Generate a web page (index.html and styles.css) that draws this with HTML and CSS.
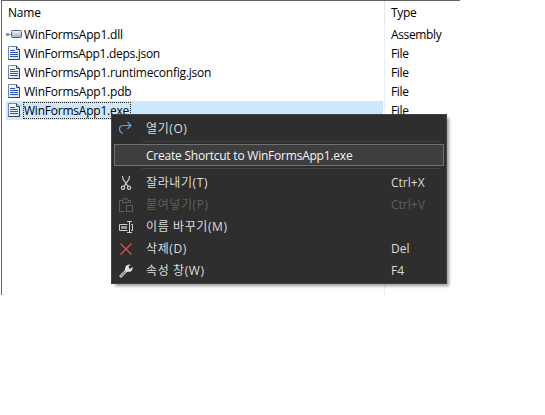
FILE: index.html
```html
<!DOCTYPE html>
<html lang="ko">
<head>
<meta charset="utf-8">
<title>WinFormsApp1</title>
<link rel="stylesheet" href="styles.css">
</head>
<body>
<svg width="0" height="0" class="defs">
  <defs>
    <linearGradient id="pin" x1="0" y1="0" x2="0" y2="1"><stop offset="0" stop-color="#f4f6fa"/><stop offset="1" stop-color="#9fa9bf"/></linearGradient>
    <linearGradient id="page" x1="0" y1="0" x2="1" y2="1"><stop offset="0" stop-color="#ffffff"/><stop offset="1" stop-color="#d5dded"/></linearGradient>
    <symbol id="doc" viewBox="0 0 16 16">
      <path d="M2.500 1.500h8l3 3v10h-11z" fill="url(#page)" stroke="#7286a6"/>
      <path d="M10.500 1.500v3h3v10h-11" fill="none" stroke="#34435f"/>
      <path d="M4 5.500h5M4 7.500h8M4 9.500h8M4 11.500h8" stroke="#2b59bd"/>
    </symbol>
  </defs>
</svg>
<div class="panel">
  <div class="row head"><span class="name">Name</span><span class="type">Type</span></div>
  <div class="row"><div class="cell"><svg class="icon" viewBox="0 0 16 16"><path d="M0 7h3v3H0z" fill="#8b95a9"/><path d="M3 8.500h2" stroke="#8b95a9"/><rect x="5.500" y="4.500" width="10" height="7" rx="1" fill="url(#pin)" stroke="#56627d"/></svg><span class="file">WinFormsApp1.dll</span></div><span class="type">Assembly</span></div>
  <div class="row"><div class="cell"><svg class="icon"><use href="#doc"/></svg><span class="file tight">WinFormsApp1.deps.json</span></div><span class="type">File</span></div>
  <div class="row"><div class="cell"><svg class="icon"><use href="#doc"/></svg><span class="file">WinFormsApp1.runtimeconfig.json</span></div><span class="type">File</span></div>
  <div class="row"><div class="cell"><svg class="icon"><use href="#doc"/></svg><span class="file">WinFormsApp1.pdb</span></div><span class="type">File</span></div>
  <div class="row"><div class="cell selected"><svg class="icon"><use href="#doc"/></svg><span class="file focus">WinFormsApp1.exe</span></div><span class="type">File</span></div>
</div>
<div class="menu">
  <div class="item"><svg class="mi" viewBox="0 0 16 16"><path d="M5 13.500C2.500 12.500 1.500 11 1.500 9C1.500 6.500 3.500 5.500 5.500 5.500H13M9.500 2L13 5.500L9.500 9" fill="none" stroke="#55a4ec" stroke-width="1.200"/></svg><span class="label down">열기(O)</span></div>
  <div class="sep s1"></div>
  <div class="item hot"><span class="create">Create Shortcut to WinFormsApp1.exe</span></div>
  <div class="sep s2"></div>
  <div class="item"><svg class="mi" viewBox="0 0 16 16"><path d="M4.500 1L5 4L9.700 11M11.500 1L11 4L6.300 11" fill="none" stroke="#d0d0d0" stroke-width="1.200"/><circle cx="5" cy="12.700" r="1.600" fill="none" stroke="#d0d0d0" stroke-width="1.200"/><circle cx="11" cy="12.700" r="1.600" fill="none" stroke="#d0d0d0" stroke-width="1.200"/></svg><span class="label">잘라내기(T)</span><span class="key">Ctrl+X</span></div>
  <div class="item off"><svg class="mi" viewBox="0 0 16 16"><path d="M6.500 14.500h-5v-11h3M10.500 3.500h2v3M4.500 5.500h6v-2.500h-1.500v-1.500h-3v1.500h-1.500zM8.500 8.500h6v6h-6z" fill="none" stroke="#5f5f5f"/></svg><span class="label">붙여넣기(P)</span><span class="key">Ctrl+V</span></div>
  <div class="item"><svg class="mi" viewBox="0 0 16 16"><path d="M9.500 5.500h-8v6h8M13 5.500h1.500v6H13M9 2.500h5M11.500 3v10M9 13.500h5" fill="none" stroke="#d0d0d0"/><path d="M3 7h6v3H3z" fill="#999"/></svg><span class="label">이름 바꾸기(M)</span></div>
  <div class="item"><svg class="mi" viewBox="0 0 16 16"><path d="M2.500 2.500l11 11M13.500 2.500l-11 11" stroke="#e84a58" stroke-width="1.200"/></svg><span class="label">삭제(D)</span><span class="key">Del</span></div>
  <div class="item"><svg class="mi" viewBox="0 0 16 16"><path d="M2.800 13.200L9 7" stroke="#bdbdbd" stroke-width="3" stroke-linecap="round"/><path d="M2.800 13.200L7.500 8.500" stroke="#666" stroke-width=".8"/><path d="M12.500 1.700L10.500 3.700L11 5.300L12.500 5.700L14.500 3.700C15.300 6.500 13.500 9 10.500 8.800L8.500 9L7 7.400C6.500 4 9 .8 12.500 1.700Z" fill="#e2e2e2"/></svg><span class="label">속성 창(W)</span><span class="key">F4</span></div>
</div>
</body>
</html>
```
FILE: styles.css
```css
body { margin: 0; width: 545px; height: 415px; overflow: hidden; position: relative; background: #fff; color: #000; font: 12px/19px "Open Sans", "Noto Sans CJK KR", sans-serif; letter-spacing: -0.22px; white-space: nowrap; }
.defs { position: absolute; }
.panel { box-sizing: border-box; width: 459px; height: 295px; margin-left: 1px; border-top: 1px solid #646464; border-left: 1px solid #646464;
  background: linear-gradient(#e5e5e5, #e5e5e5) 382px 0 / 1px 24px no-repeat, linear-gradient(#e6f0fc, #e6f0fc) 382px 24px / 1px 270px no-repeat; }
.row { display: flex; height: 19px; }
.head { height: 24px; line-height: 24px; }
.name { box-sizing: border-box; width: 383px; padding-left: 6px; }
.type { margin-left: 6px; letter-spacing: -0.35px; }
.cell { display: flex; align-items: flex-start; width: 377px; margin-left: 4px; margin-right: 2px; }
.icon { width: 16px; height: 16px; margin-top: 1px; margin-right: 1px; flex: none; }
.file { height: 17px; line-height: 17px; margin-top: 1px; padding-left: 1px; }
.tight { letter-spacing: -0.3px; }
.selected { background: #cce8ff; }
.focus { outline: 1px dotted #222; outline-offset: -1px; padding-right: 2px; }
.menu { position: absolute; left: 111px; top: 114px; width: 336px; height: 170px; box-sizing: border-box; border: 1px solid #424242; padding: 2px; background: #2e2e2e; color: #dcdcdc; box-shadow: 3px 3px 3px -1px rgba(0,0,0,.4); }
.item { display: flex; align-items: center; height: 22px; line-height: 22px; box-sizing: border-box; }
.mi { width: 16px; height: 16px; margin-left: 4px; margin-right: 12px; flex: none; }
.label { width: 245px; letter-spacing: 0.6px; }
.down { padding-top: 2px; }
.key { letter-spacing: 0; }
.hot { background: #3e3e3e; border: 1px solid #707070; color: #f4f4f4; padding-left: 31px; }
.create { padding-top: 2px; }
.off { color: #5f5f5f; }
.sep { height: 1px; background: #424242; margin-left: 28px; margin-right: 4px; }
.s1 { margin-top: 2px; margin-bottom: 2px; }
.s2 { margin-top: 2px; margin-bottom: 3px; }
```
